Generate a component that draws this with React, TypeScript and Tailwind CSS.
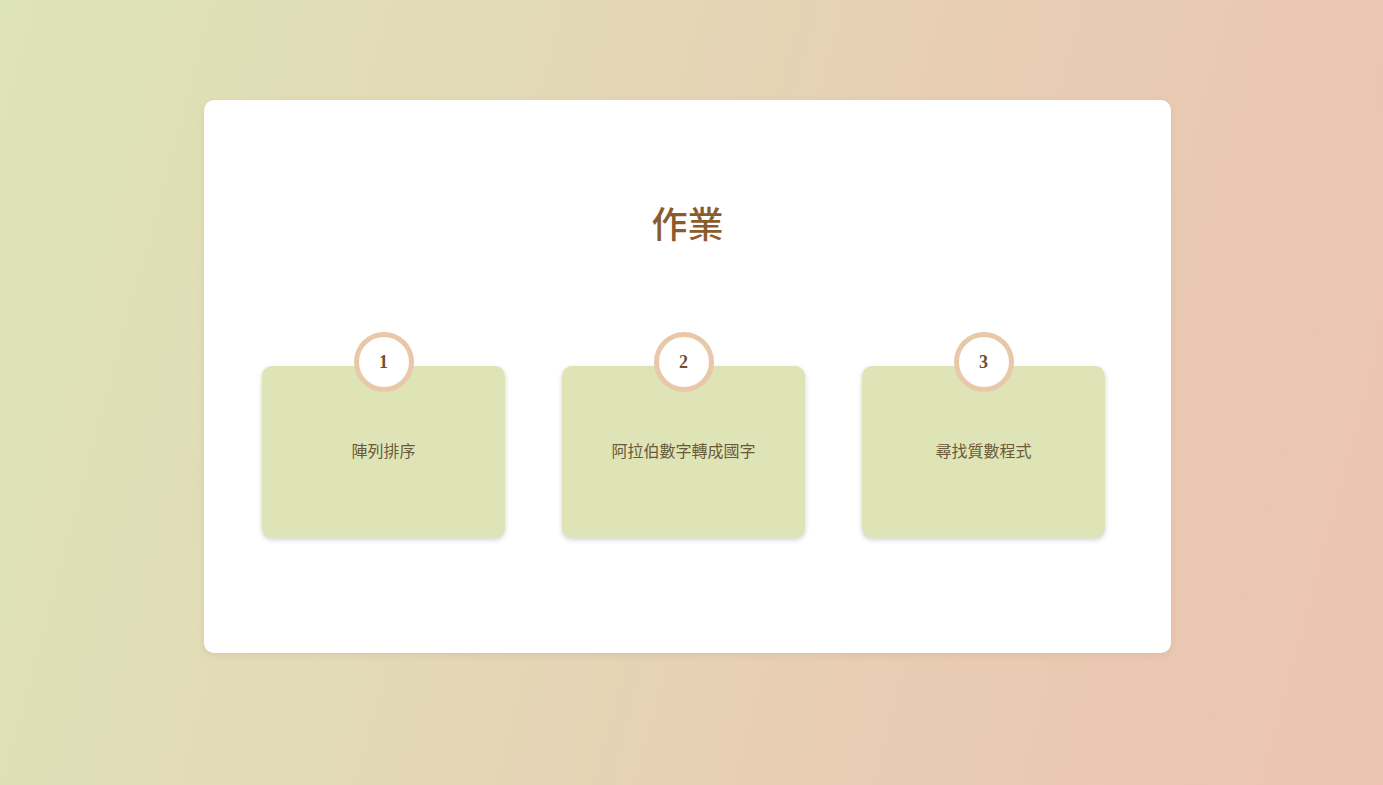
const items = ["陣列排序", "阿拉伯數字轉成國字", "尋找質數程式"];

export default function App() {
  return (
    <div className="flex min-h-[785px] w-full items-start justify-center bg-[linear-gradient(105deg,#dde4b7_0%,#e3d9b6_35%,#e9cbb3_70%,#ecc4b1_100%)] pr-2 pt-[100px] font-['Noto_Sans_CJK_TC','Noto_Sans_CJK_SC',sans-serif]">
      <div className="flex h-[553px] w-[967px] flex-col items-center rounded-[10px] bg-white shadow-[0_2px_6px_rgba(150,110,80,0.15)]">
        <h1 className="mt-[98px] text-[36px] font-medium leading-[48px] text-[#8a5c2c]">作業</h1>
        <div className="mt-[120px] flex w-full gap-[57px] pl-[58px] pr-[66px]">
          {items.map((label, i) => (
            <div
              key={label}
              className="relative flex h-[172px] w-[243px] items-center justify-center rounded-[10px] bg-[#dfe4b7] pb-1 shadow-[0_2px_5px_rgba(0,0,0,0.18)]"
            >
              <div className="absolute left-1/2 top-[-34px] flex h-[60px] w-[60px] -translate-x-1/2 items-center justify-center rounded-full border-[5px] border-[#e8c8a8] bg-white font-['Liberation_Serif',serif] text-[18px] font-bold text-[#70502c]">
                {i + 1}
              </div>
              <span className="text-[16px] text-[#6b5a3a]">{label}</span>
            </div>
          ))}
        </div>
      </div>
    </div>
  );
}
